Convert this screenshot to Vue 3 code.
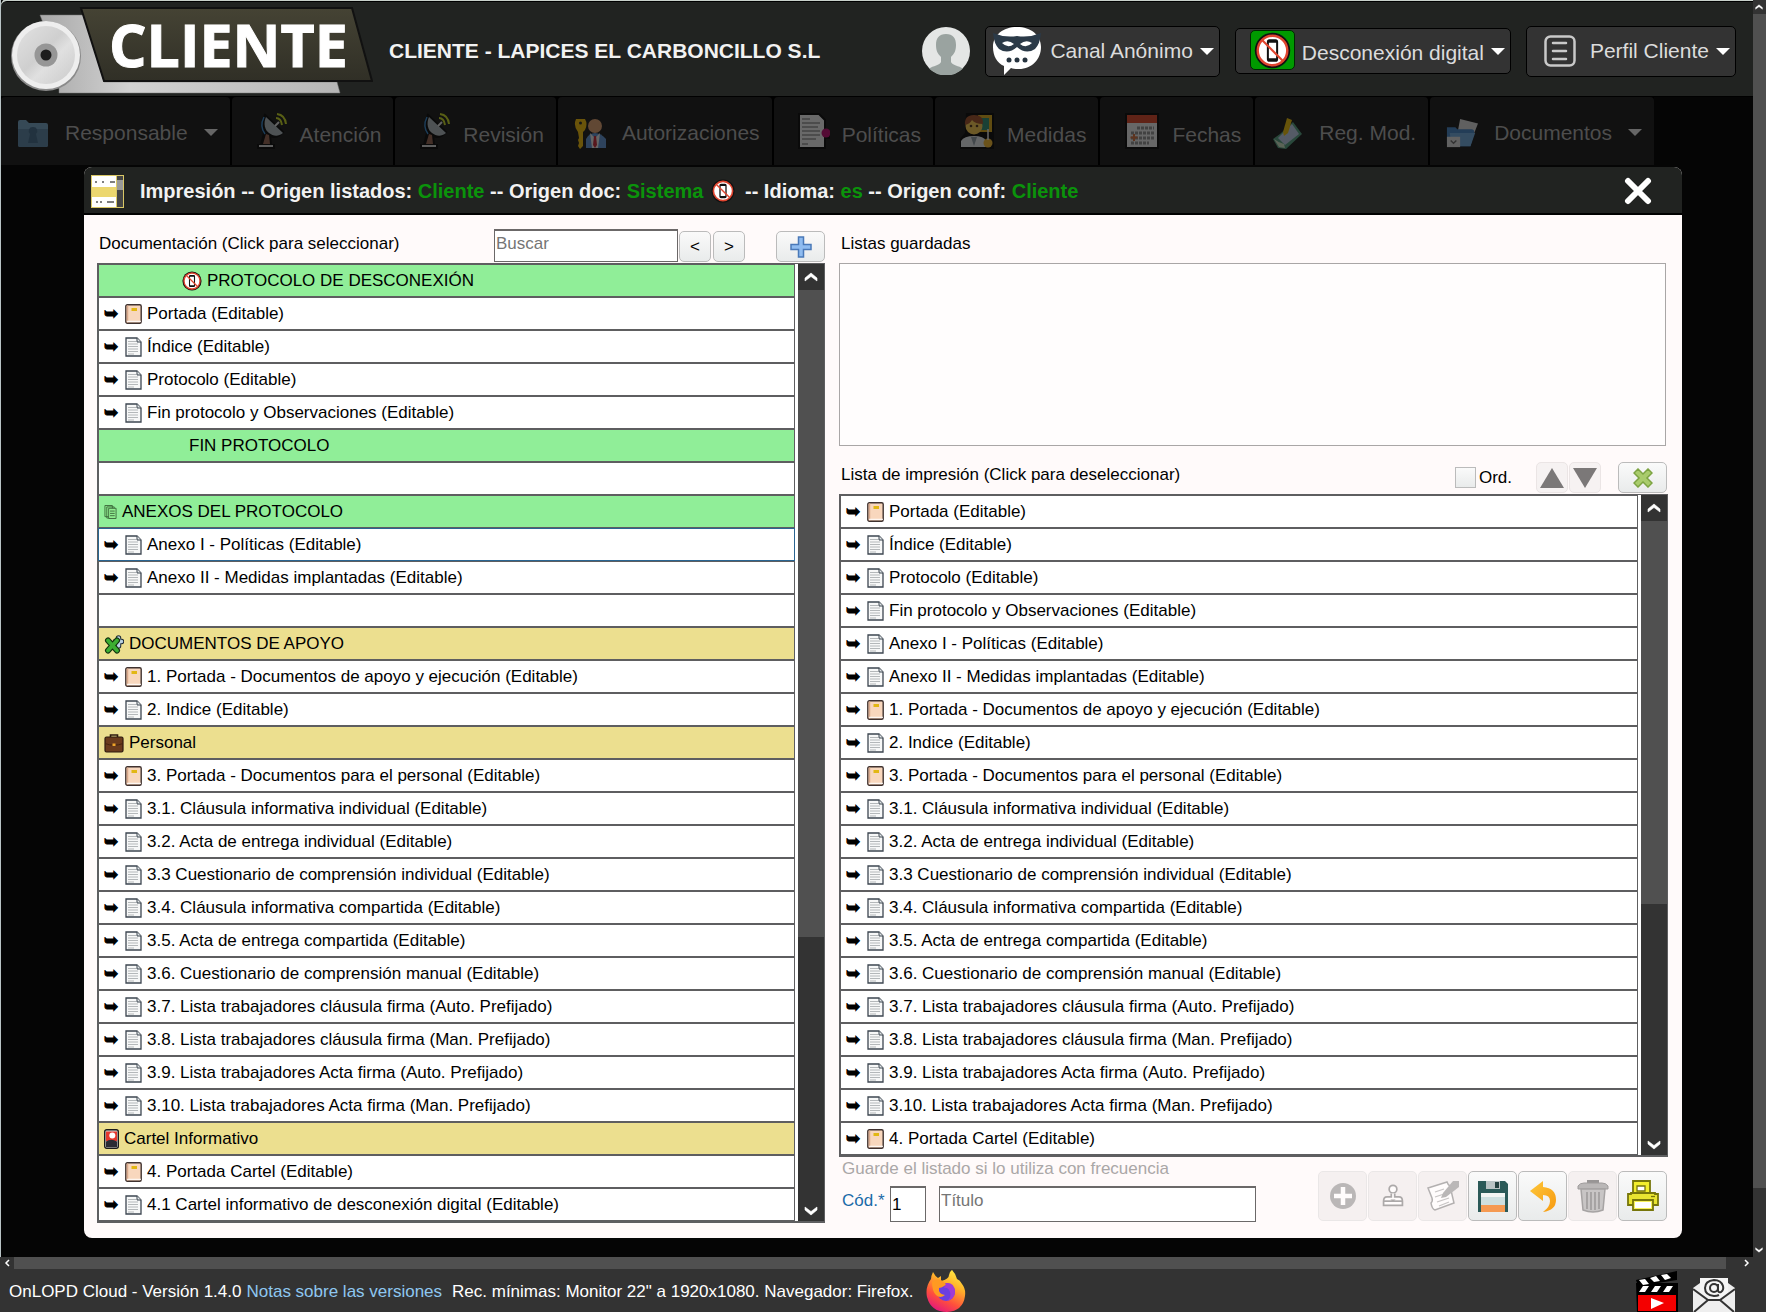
<template>
  <div class="app">
    <!-- Iconos reutilizables -->
    <svg class="sprite" aria-hidden="true">
      <defs>
        <linearGradient id="g-disc" x1="0" y1="0" x2="1" y2="1">
          <stop offset="0" stop-color="#e2e2e2" />
          <stop offset="0.45" stop-color="#cfcfcf" />
          <stop offset="0.6" stop-color="#e0e0e0" />
          <stop offset="1" stop-color="#c9c9c9" />
        </linearGradient>
        <linearGradient id="g-plate" x1="0" y1="0" x2="0" y2="1">
          <stop offset="0" stop-color="#454334" />
          <stop offset="1" stop-color="#302f26" />
        </linearGradient>
        <linearGradient id="g-metal" x1="0" y1="0" x2="1" y2="0">
          <stop offset="0" stop-color="#a8a8a8" />
          <stop offset="0.3" stop-color="#d2d2d2" />
          <stop offset="1" stop-color="#b5b5b5" />
        </linearGradient>
        <linearGradient id="g-fox" x1="0.8" y1="0" x2="0.3" y2="1">
          <stop offset="0" stop-color="#fff044" />
          <stop offset="0.35" stop-color="#ffb02a" />
          <stop offset="0.7" stop-color="#ff4f3c" />
          <stop offset="1" stop-color="#e3177e" />
        </linearGradient>
        <linearGradient id="g-undo" x1="0" y1="0" x2="1" y2="1">
          <stop offset="0" stop-color="#fdc63a" />
          <stop offset="1" stop-color="#f79a10" />
        </linearGradient>
      </defs>
      <symbol id="i-nophone" viewBox="0 0 24 24">
        <circle cx="12" cy="12" r="11.5" fill="#111" />
        <circle cx="12" cy="12" r="9.6" fill="#fff" stroke="#e0452f" stroke-width="1.6" />
        <rect x="9" y="5.4" width="6" height="13.2" rx="1" fill="#fff" stroke="#111" stroke-width="1.3" />
        <path d="M9 6.3h6M9 17.7h6" stroke="#111" stroke-width="1.4" />
        <path d="M5.4 5.4l13.2 13.2" stroke="#e0452f" stroke-width="1.4" />
      </symbol>
      <symbol id="i-doc" viewBox="0 0 17 20">
        <path d="M1 1h11l4 4v14H1z" fill="#f7f8f8" stroke="#3d4650" stroke-width="1.3" />
        <path d="M12 1v4h4" fill="#dfe4e6" stroke="#3d4650" />
        <path d="M3 4.5h8M3 7h10M3 9.500h10M3 12h10M3 14.500h10M3 17h6" stroke="#b4b8ba" />
      </symbol>
      <symbol id="i-book" viewBox="0 0 17 20">
        <rect x="0.800" y="0.800" width="15.400" height="18.400" rx="1.500" fill="#f8d7bd" stroke="#3f3230" stroke-width="1.4" />
        <path d="M2.500 1.500v17" stroke="#d9a98c" stroke-width="1.500" />
        <path d="M2 17.300h14" stroke="#fff" />
        <rect x="6.500" y="4" width="5.500" height="3" fill="#e2b714" />
      </symbol>
      <symbol id="i-pages" viewBox="0 0 14 16">
        <path d="M1 1h8v12H1zM3 2.500h8v12H3z" fill="#90ee90" stroke="#3c6b3c" />
        <path d="M5 4h8v11H5z" fill="#90ee90" stroke="#3c6b3c" />
        <path d="M6.500 7h5M6.500 9.500h5M6.500 12h5" stroke="#3c6b3c" />
      </symbol>
      <symbol id="i-puzzle" viewBox="0 0 20 20">
        <g stroke-linecap="round" fill="none">
          <path d="M14.500 4v8M11.500 7.500h6" stroke="#1d2a33" stroke-width="5.500" />
          <path d="M14.500 4v8M11.500 7.500h6" stroke="#b9d3e4" stroke-width="3.500" />
          <path d="M4 6.500l9 10M13 6.500l-9 10" stroke="#12330f" stroke-width="6" />
          <path d="M4 6.500l9 10M13 6.500l-9 10" stroke="#3cae32" stroke-width="3.800" />
        </g>
      </symbol>
      <symbol id="i-case" viewBox="0 0 20 20">
        <path d="M6.500 5V2h7v3" fill="none" stroke="#2d1a10" stroke-width="1.600" />
        <rect x="1" y="4" width="18" height="15" rx="1.500" fill="#6a3b1d" stroke="#2d1a10" stroke-width="1.200" />
        <path d="M1 10.500q9 3.500 18 0" fill="none" stroke="#452410" />
        <rect x="8.500" y="10.500" width="3" height="2.500" fill="#f0a52a" />
      </symbol>
      <symbol id="i-card" viewBox="0 0 15 20">
        <rect x="0.700" y="0.700" width="13.600" height="18.600" rx="2" fill="#ddd" stroke="#1b1b1b" stroke-width="1.400" />
        <path d="M2 2.500h11V12H2z" fill="#e5382f" />
        <path d="M2 18V12.500q5-3.500 11 0V18z" fill="#2b2b33" />
        <circle cx="8.300" cy="6.500" r="3" fill="#fff" />
      </symbol>
      <symbol id="i-up" viewBox="0 0 14 10">
        <path d="M1 9V6l6-5 6 5v3L7 4.500z" fill="#fff" stroke="#fff" stroke-width="0.600" />
      </symbol>
      <symbol id="i-folder" viewBox="0 0 32 32">
        <path d="M1 5q0-2 2-2h6l3 3h17q2 0 2 2v20q0 2-2 2H3q-2 0-2-2z" fill="#6f9dbd" />
        <path d="M1 12h30v16q0 2-2 2H3q-2 0-2-2z" fill="#557f9f" />
        <path d="M16 10a4 4 0 0 1 3 7l2 9H11l2-9a4 4 0 0 1 3-7z" fill="#3d6585" />
      </symbol>
      <symbol id="i-dish" viewBox="0 0 32 36">
        <path d="M9 2c-4 8-3 14-1 18l-3 12H2v3h16v-3h-3l-1-9c5 2 9 1 13-4z" fill="#000" stroke="#000" stroke-width="2" />
        <path d="M10 4l17 16c-5 4-10 3-14 0S7 11 10 4z" fill="#a9b4ba" />
        <path d="M8 4c-4 8-2 13 1 17" fill="none" stroke="#2f7fc4" stroke-width="1.500" />
        <path d="M10 21l-3 10h7l-1-9z" fill="#8e5c4a" />
        <path d="M3 32h14v2H3z" fill="#d0d0d0" />
        <path d="M19 13l4-4" stroke="#ddd" stroke-width="2" />
        <path d="M20 5q5 0 6 7M21 1q8 1 9 10" fill="none" stroke="#c3d41c" stroke-width="2" />
      </symbol>
      <symbol id="i-keyman" viewBox="0 0 32 32">
        <circle cx="21" cy="9" r="7" fill="#d99a6a" />
        <path d="M12 31V22q3-6 9-6t11 6v9z" fill="#5a8fd0" />
        <path d="M16 16l5 5 5-5-2 15h-6z" fill="#e5e5e5" />
        <path d="M20 19h2l1 9-2 3-2-3z" fill="#c02030" />
        <path d="M2 2h9q3 5 0 11l-2 2v14l-3 3-2-3 1-3-1-3 1-2-1-6q-5-6-2-13z" fill="#f0b800" />
        <circle cx="6.500" cy="6" r="1.500" fill="#222" />
      </symbol>
      <symbol id="i-policy" viewBox="0 0 32 36">
        <path d="M1 1h20l6 6v13h4v5h-4v10H1z" fill="#ececec" stroke="#000" stroke-width="2" />
        <path d="M4 6h8M4 10h18M4 14h16M4 18h18M4 22h18M4 26h14M4 31h6" stroke="#8d8d8d" stroke-width="1.500" />
        <circle cx="28" cy="20" r="4.500" fill="#b8006a" />
      </symbol>
      <symbol id="i-teacher" viewBox="0 0 34 36">
        <path d="M6 0h28v36H0V26l5-6z" fill="#000" />
        <rect x="18" y="2" width="14" height="17" fill="#d7a413" />
        <rect x="21" y="5" width="8" height="12" fill="#26866c" />
        <circle cx="14" cy="13" r="8.500" fill="#f4c64a" />
        <path d="M5 12Q4 2 14 2t9 9q-8 0-11-4-2 4-7 5z" fill="#9b4a22" />
        <circle cx="11" cy="13" r="1.300" fill="#4a2a12" /><circle cx="17" cy="13" r="1.300" fill="#4a2a12" />
        <path d="M1 34V28q3-5 13-5t12 5v6z" fill="#e4e8ea" />
        <path d="M11 24l3 9 3-9z" fill="#8d9aa3" />
        <circle cx="28" cy="30" r="4.500" fill="#f0b429" />
        <path d="M28 27V16" stroke="#e8e8e8" stroke-width="1.500" />
      </symbol>
      <symbol id="i-calendar" viewBox="0 0 34 36">
        <rect x="1" y="1" width="32" height="34" fill="#e9e9e9" stroke="#000" stroke-width="2" />
        <rect x="2" y="2" width="30" height="8" fill="#d63f22" />
        <path d="M12 15h17M6 20h23M6 25h23M6 30h18" stroke="#8b8b8b" stroke-width="3" stroke-dasharray="3 1" />
        <path d="M9 21v7M5.500 24.500h7" stroke="#d06a35" stroke-width="2" />
      </symbol>
      <symbol id="i-note" viewBox="0 0 32 32">
        <path d="M2 22L9 17 22 5l9 12-16 15-8-1z" fill="#4f9a7a" />
        <path d="M7 21L21 7l7 10-14 11z" fill="#bccbe6" />
        <path d="M3 22q5 4 10 5l1 4-6-1z" fill="#c9e0c0" />
        <path d="M13 19L12 15 16 1l5 2-4 13z" fill="#e8b800" />
      </symbol>
      <symbol id="i-docs" viewBox="0 0 34 32">
        <path d="M15 1l19 5-6 15-16-4z" fill="#d6d6d6" />
        <path d="M1 10h9l2 2h15q3 0 3 3l-4 15H5q-3 0-4-3z" fill="#3f7fc0" />
        <path d="M4 16h27l-5 14H6z" fill="#6aa5da" />
        <rect x="1" y="20" width="14" height="11" fill="#dcdcdc" />
        <path d="M5 24l3 3 3-3" fill="none" stroke="#666" stroke-width="1.500" />
      </symbol>
    </svg>

    <div class="viewport">
      <div class="workspace">
        <header class="topbar">
          <svg class="logo" viewBox="0 0 372 94" role="img" aria-label="Cliente">
            <path d="M39 11h44l20 67h233l3 11H58V60z" fill="url(#g-metal)" stroke="#777" stroke-width="0.500" />
            <circle cx="45" cy="52" r="35" fill="#8a8a8a" />
            <circle cx="45" cy="51" r="34" fill="#eee" />
            <circle cx="45" cy="51" r="29" fill="url(#g-disc)" />
            <circle cx="45" cy="51" r="11.500" fill="#969696" />
            <circle cx="45" cy="51" r="5.500" fill="#1d1d1d" />
            <path d="M80 4h271l20 73H103z" fill="url(#g-plate)" stroke="#111" stroke-width="2" />
            <text x="108" y="63" class="logo-text">CLIENTE</text>
          </svg>
          <h1 class="client-name">CLIENTE - LAPICES EL CARBONCILLO S.L</h1>
          <div class="top-actions">
            <svg class="avatar" viewBox="0 0 48 48">
              <circle cx="24" cy="24" r="24" fill="#e4e6e5" />
              <path d="M24 7c7 0 10 4 10 11 0 6-2 9-5 12v5c1 3 8 4 12 6.500A24 24 0 0 1 7 41.500C11 39 18 38 19 35v-5c-3-3-5-6-5-12 0-7 3-11 10-11z" fill="#9aa3a0" />
            </svg>
            <button type="button" class="top-btn canal">
              <svg width="48" height="48" viewBox="0 0 48 48">
                <path d="M24 0c14 0 24 8 24 20S39 42 26 42c-4 0-6 0-8-1l-7 7v-9C4 36 0 29 0 20 0 8 10 0 24 0z" fill="#fff" />
                <path d="M0 6q12 5 24 3 12 2 24-3-1 11-6 16-9 6-18-2-9 8-18 2Q1 17 0 6z" fill="#2b3a48" />
                <path d="M9 16q6-4 12 1-6 5-12-1zM39 16q-6-4-12 1 6 5 12-1z" fill="#fff" />
                <circle cx="16" cy="33" r="2.500" fill="#26333f" /><circle cx="24" cy="33" r="2.500" fill="#26333f" /><circle cx="32" cy="33" r="2.500" fill="#26333f" />
              </svg>
              <span>Canal Anónimo</span><i class="caret"></i>
            </button>
            <button type="button" class="top-btn digital">
              <span class="green-box"><svg width="37" height="37"><use href="#i-nophone" /></svg></span>
              <span class="low">Desconexión digital</span><i class="caret"></i>
            </button>
            <button type="button" class="top-btn perfil">
              <svg width="32" height="32" viewBox="0 0 32 32" fill="none" stroke="#c9c9c9" stroke-width="2.500" stroke-linecap="round">
                <rect x="1.500" y="1.500" width="29" height="29" rx="5" />
                <path d="M9 8h13M9 16h13M9 24h13" />
              </svg>
              <span>Perfil Cliente</span><i class="caret"></i>
            </button>
          </div>
        </header>

        <nav class="menu">
          <a v-for="item in menu" :key="item.label" href="#" class="menu-item" :class="{ tall: item.tall, 'wide-icon': item.wide }">
            <svg class="menu-icon"><use :href="'#' + item.icon" /></svg>
            <span>{{ item.label }}</span>
            <i v-if="item.caret" class="caret"></i>
          </a>
        </nav>

        <!-- Ventana de impresión -->
        <section class="modal">
          <div class="modal-head">
            <svg class="modal-icon" viewBox="0 0 33 33">
              <rect width="33" height="33" fill="#d9c766" />
              <path d="M1 1h24v11H1zM1 22h24v10H1z" fill="#fff" />
              <path d="M1 12h24v10H1z" fill="#ecd76f" />
              <path d="M4 7h2M11 7h2M19 7h5M5 27h2M9 27h2M16 27h7" stroke="#555" stroke-width="1.500" />
              <path d="M26 1h6v31h-6z" fill="#444" /><path d="M26 5h6v10h-6z" fill="#999" />
            </svg>
            <h2>
              Impresión -- Origen listados: <b>Cliente</b> -- Origen doc: <b>Sistema</b>
              <svg class="title-icon"><use href="#i-nophone" /></svg>
              -- Idioma: <b>es</b> -- Origen conf: <b>Cliente</b>
            </h2>
            <button type="button" class="close" aria-label="Cerrar">
              <svg width="28" height="28" viewBox="0 0 28 28"><path d="M4 4l20 20M24 4L4 24" stroke="#fff" stroke-width="6" stroke-linecap="round" /></svg>
            </button>
          </div>

          <div class="modal-body">
            <div class="column">
              <div class="tools">
                <label class="tools-label" for="buscar">Documentación (Click para seleccionar)</label>
                <input id="buscar" v-model="search" class="field search" type="text" placeholder="Buscar" />
                <button type="button" class="btn prev">&lt;</button>
                <button type="button" class="btn next">&gt;</button>
                <button type="button" class="btn wide" aria-label="Añadir">
                  <svg width="22" height="22" viewBox="0 0 22 22"><path d="M8.500 1h5v7.500H21v5h-7.500V21h-5v-7.500H1v-5h7.500z" fill="#8fbcf0" stroke="#4a79b8" stroke-width="1.500" /></svg>
                </button>
              </div>
              <div class="listbox">
                <ul class="rows">
                  <li v-for="(doc, i) in docs" :key="i" class="row" :class="[doc.tone, doc.indent, { current: doc.current }]">
                    <button v-if="!doc.tone && doc.label" type="button" class="entry">
                      <span class="arrow">➥</span>
                      <svg class="page"><use :href="doc.cover ? '#i-book' : '#i-doc'" /></svg>
                      <span>{{ doc.label }}</span>
                    </button>
                    <template v-else>
                      <svg v-if="doc.icon" :class="doc.mark || 'mark'"><use :href="'#' + doc.icon" /></svg>
                      <span>{{ doc.label }}</span>
                    </template>
                  </li>
                </ul>
                <div class="bar">
                  <button type="button" class="bar-btn" aria-label="Subir"><svg width="14" height="10"><use href="#i-up" /></svg></button>
                  <div class="track"><div class="thumb" :style="{ height: docsThumb + '%' }"></div></div>
                  <button type="button" class="bar-btn down" aria-label="Bajar"><svg width="14" height="10"><use href="#i-up" /></svg></button>
                </div>
              </div>
            </div>

            <div class="column">
              <div class="tools">
                <span class="tools-label">Listas guardadas</span>
              </div>
              <div class="saved"></div>
              <div class="tools print-tools">
                <span class="tools-label">Lista de impresión (Click para deseleccionar)</span>
                <label class="order"><input v-model="ordered" type="checkbox" />Ord.</label>
                <div class="pair">
                  <button type="button" class="btn" disabled aria-label="Subir elemento"><svg width="26" height="22" viewBox="0 0 26 22"><path d="M13 1l12 20H1z" fill="#7b7878" /></svg></button>
                  <button type="button" class="btn" disabled aria-label="Bajar elemento"><svg width="26" height="22" viewBox="0 0 26 22"><path d="M1 1h24L13 21z" fill="#7b7878" /></svg></button>
                </div>
                <button type="button" class="btn wide" aria-label="Vaciar">
                  <svg width="20" height="20" viewBox="0 0 20 20"><path d="M5 1l5 5 5-5 4 4-5 5 5 5-4 4-5-5-5 5-4-4 5-5-5-5z" fill="#a9cc6c" stroke="#7da442" stroke-width="1.500" /></svg>
                </button>
              </div>
              <div class="listbox">
                <ul class="rows">
                  <li v-for="doc in queue" :key="doc.label" class="row">
                    <button type="button" class="entry">
                      <span class="arrow">➥</span>
                      <svg class="page"><use :href="doc.cover ? '#i-book' : '#i-doc'" /></svg>
                      <span>{{ doc.label }}</span>
                    </button>
                  </li>
                </ul>
                <div class="bar">
                  <button type="button" class="bar-btn" aria-label="Subir"><svg width="14" height="10"><use href="#i-up" /></svg></button>
                  <div class="track"><div class="thumb" :style="{ height: queueThumb + '%' }"></div></div>
                  <button type="button" class="bar-btn down" aria-label="Bajar"><svg width="14" height="10"><use href="#i-up" /></svg></button>
                </div>
              </div>

              <div class="save-row">
                <div class="save-form">
                  <p class="hint">Guarde el listado si lo utiliza con frecuencia</p>
                  <div class="save-fields">
                    <label for="codigo">Cód.*</label>
                    <input id="codigo" v-model="code" class="field code" type="text" />
                    <input v-model="title" class="field title" type="text" placeholder="Título" aria-label="Título" />
                  </div>
                </div>
                <div class="actions">
                  <button type="button" class="btn big" disabled aria-label="Nuevo">
                    <svg width="30" height="30" viewBox="0 0 30 30"><circle cx="15" cy="15" r="13" fill="#555" /><path d="M15 6v18M6 15h18" stroke="#fff" stroke-width="4.500" /></svg>
                  </button>
                  <button type="button" class="btn big" disabled aria-label="Sellar">
                    <svg width="24" height="26" viewBox="0 0 28 28" fill="#fff" stroke="#333" stroke-width="2"><circle cx="14" cy="6" r="4.500" /><path d="M12 11v4H7q-4 0-4 5v5h22v-5q0-5-4-5h-5v-4" /><path d="M3 20h22" /><path d="M11 18h6l-3 3z" fill="#333" stroke="none" /></svg>
                  </button>
                  <button type="button" class="btn big" disabled aria-label="Editar">
                    <svg width="34" height="34" viewBox="0 0 34 34"><path d="M2 9l19-6q1 3 3 4l4 17L9 31Q6 30 5 24q2-2 1-5z" fill="#fff" stroke="#444" stroke-width="1.500" /><path d="M9 13l9-3M9 18l12-4M11 23l12-4M13 27l10-4" stroke="#777" stroke-width="1.300" /><path d="M15 19l2-5L27 2h6v6L20 18z" fill="#555" /></svg>
                  </button>
                  <button type="button" class="btn big" aria-label="Guardar">
                    <svg width="30" height="32" viewBox="0 0 30 32"><path d="M0 1h27l3 3v28H0z" fill="#2b5a58" /><path d="M8 1h14v8H8z" fill="#b9c3c4" /><path d="M17 2h4v6h-4z" fill="#24403f" /><path d="M3 13h24v19H3z" fill="#f4f5f3" /><path d="M3 17h24v9H3z" fill="#cfe0e0" /><path d="M3 25h24v7H3z" fill="#f59a52" /></svg>
                  </button>
                  <button type="button" class="btn big" aria-label="Deshacer">
                    <svg width="28" height="32" viewBox="0 0 28 32"><path d="M1 11L14 1v6q13 1 13 13 0 10-13 12 7-5 7-11 0-6-7-6v6z" fill="url(#g-undo)" /></svg>
                  </button>
                  <button type="button" class="btn big" disabled aria-label="Eliminar">
                    <svg width="32" height="34" viewBox="0 0 32 34"><path d="M10 1h12v3H10z" fill="#000" /><path d="M1 7q2-3 6-3h18q4 0 6 3v3H1z" fill="#555" stroke="#111" /><path d="M4 10h24l-2 21q-10 4-20 0z" fill="#777" stroke="#222" stroke-width="1.500" /><path d="M10 13v17M14 13v18M18 13v18M22 13v17" stroke="#111" stroke-width="1.600" /></svg>
                  </button>
                  <button type="button" class="btn big" aria-label="Imprimir">
                    <svg width="32" height="32" viewBox="0 0 32 32" stroke="#77760b" stroke-width="1.800"><path d="M6 13V1h17v12" fill="#f3ee2c" /><path d="M10 6h8v5h-8z" fill="#fff" stroke-width="1.300" /><path d="M1 14h3v-1h24v1h3v11H1z" fill="#e9e531" /><path d="M6 20h20v10H6z" fill="#f7f25a" /><path d="M8 22h16v6H8z" fill="#fff" stroke="none" /><path d="M24 16.500h4" stroke-width="1.300" /></svg>
                  </button>
                </div>
              </div>
            </div>
          </div>
        </section>
      </div>

      <div class="page-bar">
        <svg width="8" height="6" class="page-bar-end"><use href="#i-up" /></svg>
        <div class="track"><div class="thumb" :style="{ height: pageThumb + '%' }"></div></div>
        <svg width="8" height="6" class="page-bar-end flip"><use href="#i-up" /></svg>
      </div>
    </div>

    <div class="page-hbar">
      <svg width="6" height="8" viewBox="0 0 6 8"><path d="M5 1L2 4l3 3" fill="none" stroke="#fff" stroke-width="1.500" /></svg>
      <div class="htrack"></div>
      <svg width="6" height="8" viewBox="0 0 6 8"><path d="M1 1l3 3-3 3" fill="none" stroke="#fff" stroke-width="1.500" /></svg>
    </div>

    <footer class="footer">
      <span>OnLOPD Cloud - Versión 1.4.0</span>
      <a href="#">Notas sobre las versiones</a>
      <span>Rec. mínimas: Monitor 22" a 1920x1080. Navegador: Firefox.</span>
      <svg class="firefox" viewBox="0 0 40 42">
        <path d="M26 0q4 4 5 9 3 1 5 5 4 5 3 12-2 15-18 16Q5 42 1 27-1 17 5 9q0-3 2-7 2 4 5 6l3-2v5q8-2 8-6 0-3 3-5z" fill="url(#g-fox)" />
        <circle cx="20" cy="22" r="9" fill="#6b3fe0" />
        <path d="M20 13q8-1 9 8 0 8-8 10 5-4 3-9-2-5-6-4z" fill="#a03bd6" />
        <path d="M6 12q5-4 9-2l5 4q-2 3-7 4-1 6 6 7-5 4-9 0-4-4-4-13z" fill="#ff9a22" />
      </svg>
      <div class="footer-links">
        <a href="#" aria-label="Vídeos">
          <svg width="42" height="42" viewBox="0 0 42 42">
            <path d="M0 9L41 0v9L2 15z" fill="#000" /><path d="M0 12h42v30H1z" fill="#000" />
            <path d="M3 9l6-1 4 5-6 1zM14 7l6-2 4 5-6 1zM25 4l6-1 4 4-6 2zM7 15h6l-4 6H3zM19 15h6l-4 6h-6zM31 15h6l-4 6h-6z" fill="#fff" />
            <path d="M2 24h38v16H2z" fill="#f40000" /><path d="M15 27l13 5-13 6z" fill="#fff" />
          </svg>
        </a>
        <a href="#" aria-label="Correo">
          <svg width="42" height="36" viewBox="0 0 42 36">
            <path d="M0 11L7 6h28l7 5v25H0z" fill="#eee" /><path d="M7 1h28v17l-14 6-14-6z" fill="#f5f5f5" />
            <path d="M0 12l15 11h12l15-11M1 35l14-12M41 35L27 23" fill="none" stroke="#333" stroke-width="2" />
            <circle cx="21" cy="11" r="4" fill="none" stroke="#333" stroke-width="2" />
            <path d="M25 7v6q0 3 3 2 3-2 2-6-2-6-9-6-9 1-9 8t9 8q3 0 5-1" fill="none" stroke="#333" stroke-width="2" />
          </svg>
        </a>
      </div>
    </footer>
  </div>
</template>

<script setup>
import { ref } from 'vue'

const search = ref('')
const ordered = ref(false)
const code = ref('1')
const title = ref('')

// Tamaño de los tiradores, en % de la pista
const docsThumb = 71.5
const queueThumb = 63
const pageThumb = 95.5

const menu = [
  { label: 'Responsable', icon: 'i-folder', caret: true },
  { label: 'Atención', icon: 'i-dish', tall: true },
  { label: 'Revisión', icon: 'i-dish', tall: true },
  { label: 'Autorizaciones', icon: 'i-keyman' },
  { label: 'Políticas', icon: 'i-policy', tall: true },
  { label: 'Medidas', icon: 'i-teacher', tall: true, wide: true },
  { label: 'Fechas', icon: 'i-calendar', tall: true, wide: true },
  { label: 'Reg. Mod.', icon: 'i-note' },
  { label: 'Documentos', icon: 'i-docs', caret: true }
]

const personal = [
  { label: '3. Portada - Documentos para el personal (Editable)', cover: true },
  { label: '3.1. Cláusula informativa individual (Editable)' },
  { label: '3.2. Acta de entrega individual (Editable)' },
  { label: '3.3 Cuestionario de comprensión individual (Editable)' },
  { label: '3.4. Cláusula informativa compartida (Editable)' },
  { label: '3.5. Acta de entrega compartida (Editable)' },
  { label: '3.6. Cuestionario de comprensión manual (Editable)' },
  { label: '3.7. Lista trabajadores cláusula firma (Auto. Prefijado)' },
  { label: '3.8. Lista trabajadores cláusula firma (Man. Prefijado)' },
  { label: '3.9. Lista trabajadores Acta firma (Auto. Prefijado)' },
  { label: '3.10. Lista trabajadores Acta firma (Man. Prefijado)' }
]

const docs = [
  { label: 'PROTOCOLO DE DESCONEXIÓN', tone: 'green', icon: 'i-nophone', indent: 'indent' },
  { label: 'Portada (Editable)', cover: true },
  { label: 'Índice (Editable)' },
  { label: 'Protocolo (Editable)' },
  { label: 'Fin protocolo y Observaciones (Editable)' },
  { label: 'FIN PROTOCOLO', tone: 'green', indent: 'indent-text' },
  { label: '' },
  { label: 'ANEXOS DEL PROTOCOLO', tone: 'green', icon: 'i-pages', mark: 'mark-pages' },
  { label: 'Anexo I - Políticas (Editable)', current: true },
  { label: 'Anexo II - Medidas implantadas (Editable)' },
  { label: '' },
  { label: 'DOCUMENTOS DE APOYO', tone: 'khaki', icon: 'i-puzzle' },
  { label: '1. Portada - Documentos de apoyo y ejecución (Editable)', cover: true },
  { label: '2. Indice (Editable)' },
  { label: 'Personal', tone: 'khaki', icon: 'i-case' },
  ...personal,
  { label: 'Cartel Informativo', tone: 'khaki', icon: 'i-card', mark: 'mark-card' },
  { label: '4. Portada Cartel (Editable)', cover: true },
  { label: '4.1 Cartel informativo de desconexión digital (Editable)' }
]

const queue = [
  { label: 'Portada (Editable)', cover: true },
  { label: 'Índice (Editable)' },
  { label: 'Protocolo (Editable)' },
  { label: 'Fin protocolo y Observaciones (Editable)' },
  { label: 'Anexo I - Políticas (Editable)' },
  { label: 'Anexo II - Medidas implantadas (Editable)' },
  { label: '1. Portada - Documentos de apoyo y ejecución (Editable)', cover: true },
  { label: '2. Indice (Editable)' },
  ...personal,
  { label: '4. Portada Cartel (Editable)', cover: true }
]
</script>

<style>
body {
  margin: 0;
  background: #050505;
}
</style>

<style scoped>
.app,
.app button,
.app input {
  font-family: "Liberation Sans", Arial, sans-serif;
  font-size: 17px;
}

.app,
.app * {
  box-sizing: border-box;
}

.app {
  display: flex;
  flex-direction: column;
  min-height: 100vh;
  line-height: 20px;
  color: #000;
  background: #050505;
}

.sprite {
  position: absolute;
  width: 0;
  height: 0;
}

svg {
  flex: none;
  display: block;
}

a {
  text-decoration: none;
}

.viewport {
  display: flex;
  flex: 1;
}

.workspace {
  flex: 1;
  min-width: 0;
  display: flex;
  flex-direction: column;
  border-left: 1px solid #b9c4c6;
}

/* Cabecera */
.topbar {
  display: flex;
  align-items: center;
  height: 96px;
  margin-top: 1px;
  padding: 4px 17px 0 0;
  border-top: 1px solid #000;
  border-bottom: 1px solid #000;
  border-radius: 6px 0 0 0;
  background: #212321;
  box-shadow: 0 -2px 0 #c8d0ca;
}

.logo {
  width: 372px;
  height: 94px;
}

.logo-text {
  font-family: "Open Sans", sans-serif;
  font-size: 59px;
  font-weight: 700;
  fill: #fff;
  stroke: #fff;
  stroke-width: 1px;
}

.client-name {
  margin: 0 0 0 16px;
  font-size: 21px;
  line-height: 24px;
  color: #f2f2f2;
  white-space: nowrap;
}

.top-actions {
  display: flex;
  align-items: center;
  gap: 15px;
  margin-left: auto;
}

.avatar {
  width: 48px;
  height: 48px;
}

.app .top-btn {
  display: flex;
  align-items: center;
  height: 51px;
  padding: 0 5px;
  border: 1px solid #000;
  border-radius: 5px;
  background: #333;
  color: #dcdcdc;
  font-size: 21px;
  white-space: nowrap;
}

.top-btn .caret {
  margin-left: 7px;
  color: #fff;
}

.canal svg {
  margin: 0 9px 0 2px;
}

.app .digital {
  height: 46px;
}

.green-box {
  display: flex;
  align-items: center;
  justify-content: center;
  width: 45px;
  height: 40px;
  margin: 0 7px 2px 9px;
  border: 1px solid #002800;
  border-radius: 5px;
  background: #009a00;
}

.low {
  padding-top: 3px;
}

.perfil svg {
  margin: 0 14px 0 12px;
}

.caret {
  border: 7px solid transparent;
  border-top-color: currentColor;
  border-bottom: 0;
}

/* Menú principal */
.menu {
  display: flex;
  gap: 2px;
  height: 68px;
  margin-bottom: 2px;
  background: #000;
  align-self: flex-start;
}

.menu-item {
  display: flex;
  align-items: center;
  gap: 16px;
  padding: 3px 12px 0 16px;
  border-radius: 4px 4px 0 0;
  background: #111;
  color: #4d4d4d;
  font-size: 21px;
  white-space: nowrap;
}

.menu-item .caret {
  color: #666;
}

.menu-item.tall {
  gap: 12px;
  padding: 7px 12px 0 24px;
}

.menu-icon {
  width: 32px;
  height: 32px;
  opacity: 0.4;
}

.tall .menu-icon {
  height: 36px;
  margin-bottom: 8px;
}

.wide-icon .menu-icon {
  width: 36px;
}

/* Ventana */
.modal {
  margin: 0 71px 19px 83px;
  border-radius: 8px;
  background: #fffafa;
}

.modal-head {
  display: flex;
  align-items: center;
  height: 48px;
  padding: 2px 30px 0 7px;
  border-bottom: 2px solid #000;
  border-radius: 8px 8px 0 0;
  background: #212321;
}

.modal-icon {
  width: 33px;
  height: 33px;
}

.modal-head h2 {
  margin: 0 0 0 16px;
  font-size: 20px;
  line-height: 24px;
  color: #f2f2f2;
}

.modal-head b {
  color: #0b930b;
}

.title-icon {
  display: inline-block;
  width: 24px;
  height: 24px;
  margin: 0 4px 0 8px;
  vertical-align: bottom;
}

.close {
  margin-left: auto;
  padding: 0;
  border: 0;
  background: none;
}

.modal-body {
  display: grid;
  grid-template-columns: 728fr 829fr;
  gap: 14px;
  padding: 0 14px 15px 13px;
}

.column {
  min-width: 0;
}

.tools {
  display: flex;
  align-items: flex-end;
  height: 48px;
  padding-bottom: 1px;
}

.print-tools {
  padding-right: 1px;
}

.tools-label {
  flex: 1;
  padding: 0 0 8px 2px;
  white-space: nowrap;
}

.field {
  border: 1px solid #6b6868;
  border-top-width: 2px;
  padding: 0 1px;
  background: #fff;
  color: #000;
}

.field::placeholder {
  color: #757575;
  opacity: 1;
}

.search {
  width: 184px;
  height: 33px;
  padding-bottom: 5px;
}

.btn {
  display: flex;
  align-items: center;
  justify-content: center;
  width: 32px;
  height: 31px;
  padding: 0;
  border: 1px solid #bbb;
  border-radius: 5px;
  background: linear-gradient(#fafafa, #e9ebeb);
  color: #000;
}

.btn:disabled {
  opacity: 0.4;
  border-color: #ccc;
  background: #e8e2e2;
}

.pair .btn:disabled {
  opacity: 1;
  border-color: #ebe5e5;
  background: #f6f2f2;
}

.prev {
  margin-left: 1px;
}

.next {
  margin: 0 31px 0 2px;
}

.btn.wide {
  width: 49px;
}

.btn.big {
  width: 49px;
  height: 50px;
}

.order {
  display: flex;
  align-items: center;
  gap: 3px;
  margin-right: 24px;
  padding-bottom: 5px;
}

.order input {
  appearance: none;
  width: 21px;
  height: 21px;
  margin: 0;
  border: 1px solid #bbb;
  background: linear-gradient(#fafafa, #e9ebeb);
}

.pair {
  display: flex;
  gap: 1px;
  margin-right: 17px;
}

.saved {
  height: 183px;
  margin-right: 2px;
  border: 1px solid #a9a6a6;
  background: #fffdfd;
}

/* Listas */
.listbox {
  display: flex;
  border: 1px solid #5e5e60;
  border-bottom-width: 2px;
  background: #fff;
}

.rows {
  flex: 1;
  min-width: 0;
  margin: 0 3px 0 0;
  padding: 0;
  list-style: none;
}

.row {
  display: flex;
  align-items: center;
  gap: 5px;
  height: 33px;
  padding: 0 5px;
  border: 1px solid #5e5e60;
}

.row.current {
  border-color: #2a6592;
}

.green {
  background: #90ee98;
}

.khaki {
  background: #ecdf8f;
}

.row.indent {
  padding-left: 83px;
}

.row.indent-text {
  padding-left: 90px;
}

.entry {
  display: flex;
  align-items: center;
  gap: 5px;
  width: 100%;
  padding: 0;
  border: 0;
  background: none;
  color: #000;
  text-align: left;
  white-space: nowrap;
}

.arrow {
  width: 16px;
  font-family: "DejaVu Sans", sans-serif;
  font-size: 17px;
  font-weight: 700;
  line-height: 18px;
  padding-bottom: 2px;
  -webkit-text-stroke: 1px #000;
}

.page {
  width: 17px;
  height: 20px;
}

.mark {
  width: 20px;
  height: 20px;
}

.mark-card {
  width: 15px;
  height: 20px;
}

.mark-pages {
  width: 13px;
  height: 16px;
}

.bar {
  display: flex;
  flex-direction: column;
  width: 26px;
  background: #333;
}

.bar-btn {
  display: flex;
  align-items: center;
  justify-content: center;
  height: 26px;
  padding: 0;
  border: 0;
  background: none;
}

.bar-btn.down {
  align-items: flex-end;
  padding-bottom: 5px;
}

.down svg,
.flip {
  transform: rotate(180deg);
}

.track {
  flex: 1;
}

.thumb {
  background: #505050;
}

/* Guardar listado */
.save-row {
  display: flex;
  justify-content: space-between;
  padding-right: 1px;
}

.hint {
  margin: 0;
  padding: 2px 0 7px 3px;
  color: #aaa7a7;
}

.save-fields {
  display: flex;
}

.save-fields label {
  width: 48px;
  padding: 5px 0 0 3px;
  margin-right: 3px;
  color: #1a6aa8;
}

.code {
  width: 36px;
  height: 36px;
  margin-right: 13px;
}

.title {
  width: 317px;
  height: 36px;
  padding-bottom: 8px;
}

.actions {
  display: flex;
  gap: 1px;
  padding-top: 14px;
}

/* Barras de desplazamiento de la página */
.page-bar {
  display: flex;
  flex-direction: column;
  width: 13px;
  background: #333;
}

.page-bar-end {
  margin: 4px 2px;
}

.page-hbar {
  display: flex;
  align-items: center;
  justify-content: space-between;
  height: 12px;
  padding: 0 16px 0 4px;
  background: #333;
}

.htrack {
  flex: 1;
  height: 12px;
  margin: 0 18px 0 4px;
  background: #505050;
}

/* Pie */
.footer {
  display: flex;
  align-items: center;
  height: 43px;
  padding: 3px 31px 0 9px;
  background: #333;
  color: #fff;
  white-space: nowrap;
}

.footer a {
  color: #8ec7f0;
}

.footer > a {
  margin: 0 10px 0 5px;
}

.firefox {
  width: 40px;
  height: 42px;
  margin: 0 0 3px 12px;
}

.footer-links {
  display: flex;
  align-items: flex-end;
  gap: 15px;
  margin-left: auto;
}
</style>
